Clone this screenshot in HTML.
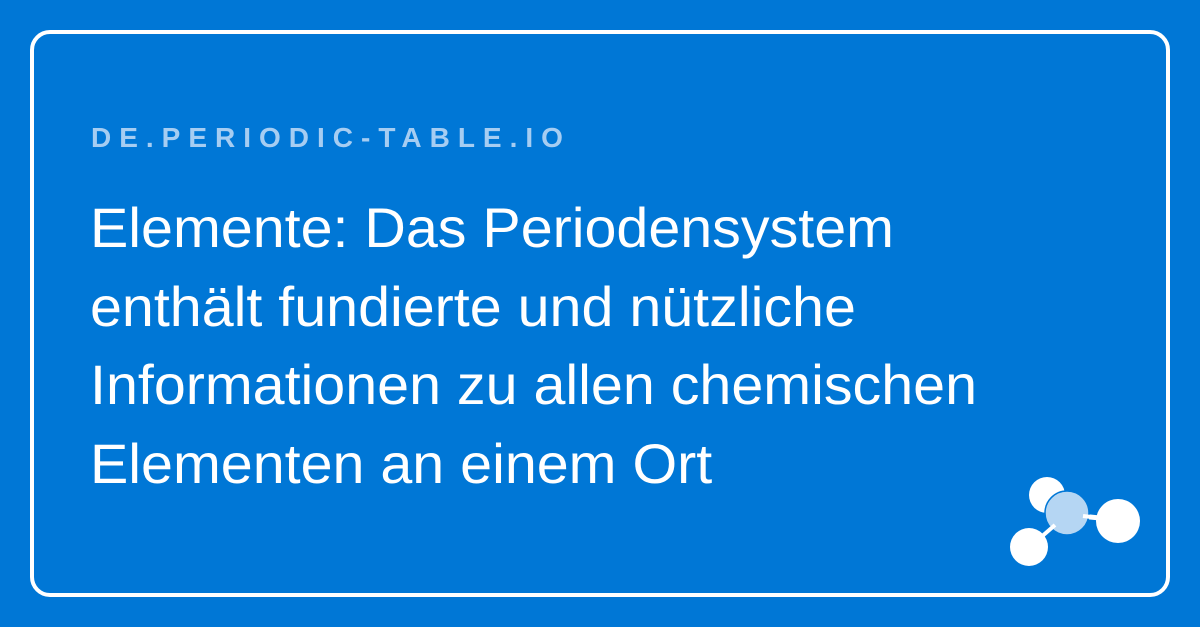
<!DOCTYPE html>
<html><head><meta charset="utf-8"><style>
html,body{margin:0;padding:0}
body{width:1200px;height:627px;background:#0077d6;position:relative;overflow:hidden;font-family:"Liberation Sans",sans-serif}
.box{position:absolute;left:30px;top:30px;width:1132px;height:559px;border:4px solid #fff;border-radius:20px}
.sub{position:absolute;left:91px;top:122px;font-size:28px;font-weight:bold;color:#a6cdf2;letter-spacing:8px;white-space:nowrap}
.l{position:absolute;left:90px;font-size:56px;color:#fff;white-space:nowrap;transform-origin:0 0;transform:scaleX(1.025);line-height:1}
</style></head><body>
<div class="box"></div>
<div class="sub">DE.PERIODIC-TABLE.IO</div>
<div class="l" style="top:200px">Elemente: Das Periodensystem</div>
<div class="l" style="top:279px">enthält fundierte und nützliche</div>
<div class="l" style="top:357px">Informationen zu allen chemischen</div>
<div class="l" style="top:436px">Elementen an einem Ort</div>
<svg style="position:absolute;left:0;top:0" width="1200" height="627">
<circle cx="1047" cy="495" r="18" fill="#fff"/>
<circle cx="1029" cy="547" r="19" fill="#fff"/>
<circle cx="1118" cy="521" r="22" fill="#fff"/>
<line x1="1080" y1="516" x2="1110" y2="519" stroke="#fff" stroke-width="5"/>
<circle cx="1067" cy="513" r="22" fill="#b5d6f3" stroke="#0077d6" stroke-width="1.5"/>
<line x1="1032" y1="545" x2="1055" y2="525" stroke="#fff" stroke-width="4"/>
<line x1="1083" y1="516" x2="1100" y2="518" stroke="#fff" stroke-width="4"/>
</svg>
</body></html>
